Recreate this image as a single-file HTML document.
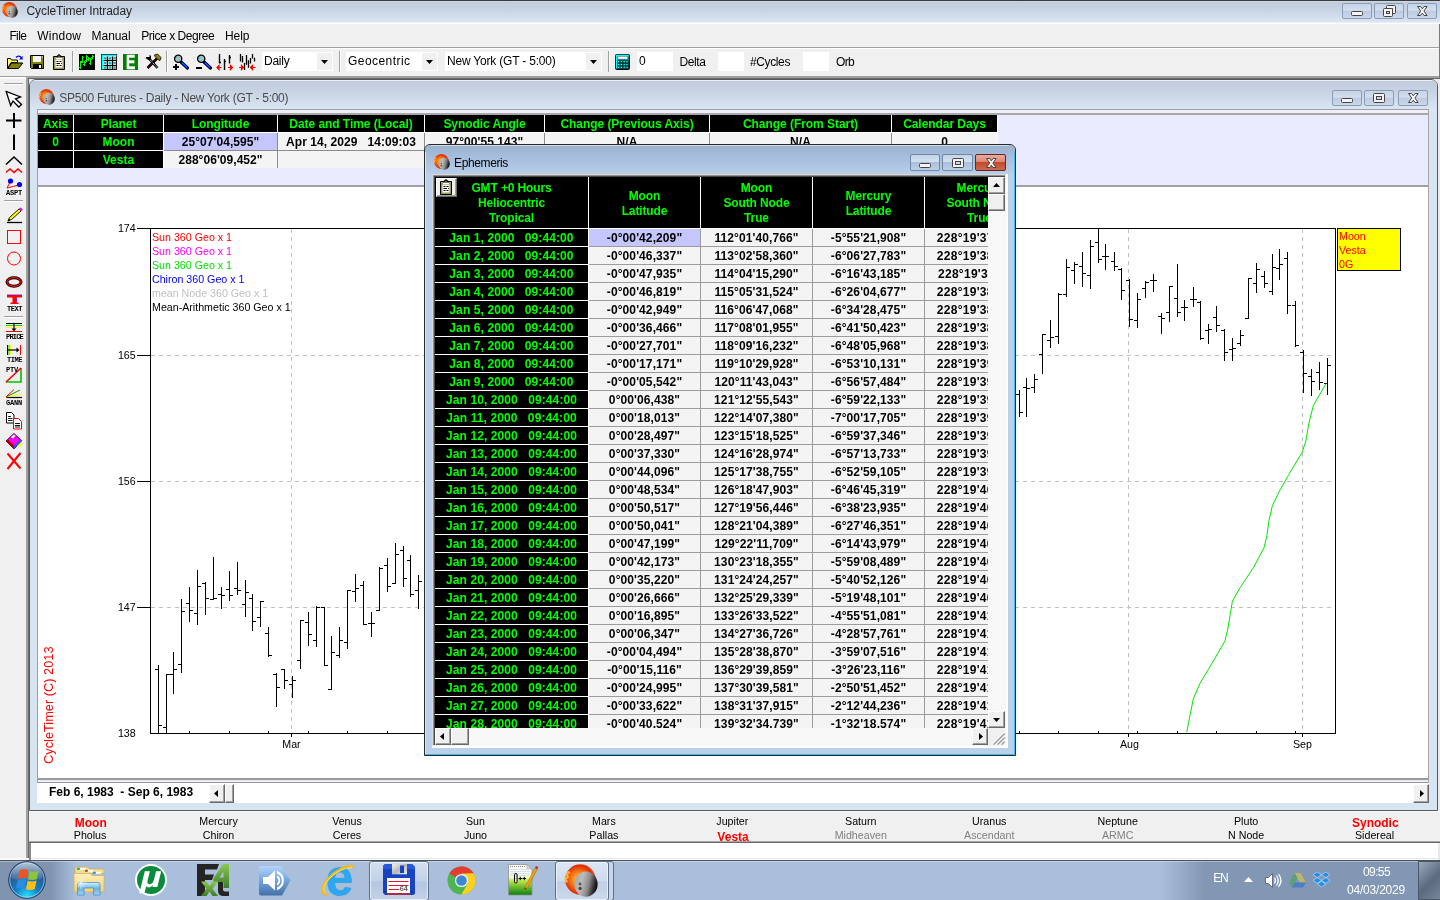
<!DOCTYPE html>
<html lang="en"><head><meta charset="utf-8"><title>CycleTimer Intraday</title>
<style>
*{box-sizing:border-box;margin:0;padding:0}
html,body{width:1440px;height:900px;overflow:hidden;background:#ececec}
body{will-change:transform;font-family:"Liberation Sans",sans-serif;font-size:12px;color:#000;position:relative}
.a{position:absolute}
.t{position:absolute;white-space:pre;line-height:1}
.ui{font-family:"Liberation Sans",sans-serif;font-size:12px;letter-spacing:0.15px}
.b{font-weight:bold}
.g{color:#00ff00}
svg{position:absolute;overflow:visible}
.cb{position:absolute;border:1px solid #8a9cb6;border-radius:2px;background:linear-gradient(#c6d4e8,#d3deee 45%,#bccbe2 50%,#cbd8ea)}
.hc{position:absolute;background:#000;color:#00ff00;font-weight:bold;font-size:12px;text-align:center;white-space:pre;overflow:hidden}
.dc{position:absolute;background:#f4f4f4;color:#000;font-weight:bold;font-size:12px;text-align:center;white-space:pre;overflow:hidden}
.pl{position:absolute;width:120px;text-align:center;font-size:11px;line-height:14px;white-space:pre}
</style></head>
<body>
<div class="a" style="left:0px;top:0px;width:1440px;height:22px;background:linear-gradient(#c0ccdc,#c5d1e1 35%,#d9e5f2);"></div>
<div class="a" style="left:0px;top:1px;width:1440px;height:1px;background:#c8d6e6;"></div>
<div class="a" style="left:0px;top:22px;width:1440px;height:1px;background:#eaf0f7;"></div>
<div class="a" style="left:0px;top:0px;width:1440px;height:1px;background:#3c3c3c;"></div>
<div class="t" style="left:26.5px;top:5px;font-size:12px;color:#262626;letter-spacing:-0.08px;">CycleTimer Intraday</div>
<div class="cb" style="left:1342px;top:3px;width:30px;height:16px"></div>
<div class="cb" style="left:1374px;top:3px;width:30px;height:16px"></div>
<div class="cb" style="left:1407px;top:3px;width:30px;height:16px"></div>
<div class="a" style="left:0px;top:23px;width:1440px;height:24px;background:#f0f0f0;"></div>
<div class="a" style="left:0px;top:47px;width:1440px;height:1px;background:#a0a0a0;"></div>
<div class="a" style="left:0px;top:48px;width:1440px;height:1px;background:#ffffff;"></div>
<div class="a" style="left:0px;top:49px;width:1440px;height:27px;background:#f0f0f0;"></div>
<div class="a" style="left:0px;top:76px;width:1440px;height:2px;background:#a0a0a0;"></div>
<div class="a" style="left:0px;top:78px;width:1440px;height:1px;background:#696969;"></div>
<div class="a" style="left:1439px;top:23px;width:1px;height:55px;background:#7a7a7a;"></div>
<div class="a" style="left:0px;top:23px;width:1440px;height:1px;background:#ffffff;"></div>
<div class="a" style="left:0px;top:77px;width:26px;height:783px;background:#f0f0f0;"></div>
<div class="a" style="left:0px;top:77px;width:26px;height:2px;background:#fcfcfc;"></div>
<div class="a" style="left:26px;top:77px;width:2px;height:783px;background:#a0a0a0;"></div>
<div class="a" style="left:28px;top:78px;width:1px;height:782px;background:#696969;"></div>
<div class="t" style="left:9.4px;top:29.5px;font-size:12px;color:#000;letter-spacing:-0.609px;">File</div>
<div class="t" style="left:37.25px;top:29.5px;font-size:12px;color:#000;letter-spacing:0.22px;">Window</div>
<div class="t" style="left:91.6px;top:29.5px;font-size:12px;color:#000;letter-spacing:-0.06px;">Manual</div>
<div class="t" style="left:141.25px;top:29.5px;font-size:12px;color:#000;letter-spacing:-0.455px;">Price x Degree</div>
<div class="t" style="left:225px;top:29.5px;font-size:12px;color:#000;letter-spacing:-0.107px;">Help</div>
<div class="a" style="left:72px;top:51px;width:1px;height:21px;background:#a0a0a0;"></div>
<div class="a" style="left:73px;top:51px;width:1px;height:21px;background:#ffffff;"></div>
<div class="a" style="left:166px;top:51px;width:1px;height:21px;background:#a0a0a0;"></div>
<div class="a" style="left:167px;top:51px;width:1px;height:21px;background:#ffffff;"></div>
<div class="a" style="left:339px;top:51px;width:1px;height:21px;background:#a0a0a0;"></div>
<div class="a" style="left:340px;top:51px;width:1px;height:21px;background:#ffffff;"></div>
<div class="a" style="left:608px;top:51px;width:1px;height:21px;background:#a0a0a0;"></div>
<div class="a" style="left:609px;top:51px;width:1px;height:21px;background:#ffffff;"></div>
<div class="a" style="left:262px;top:52px;width:71px;height:19px;background:#ffffff;"></div>
<div class="a" style="left:317px;top:53px;width:15px;height:17px;background:#f0f0f0;"></div>
<svg style="left:321px;top:60px" width="7" height="4"><path d="M0 0h7l-3.500 4z" fill="#000"/></svg>
<div class="t" style="left:264px;top:54.7px;font-size:12px;color:#000;letter-spacing:-0.234px;">Daily</div>
<div class="a" style="left:346px;top:52px;width:92px;height:19px;background:#ffffff;"></div>
<div class="a" style="left:422px;top:53px;width:15px;height:17px;background:#f0f0f0;"></div>
<svg style="left:426px;top:60px" width="7" height="4"><path d="M0 0h7l-3.500 4z" fill="#000"/></svg>
<div class="t" style="left:348px;top:54.7px;font-size:12px;color:#000;letter-spacing:0.447px;">Geocentric</div>
<div class="a" style="left:445px;top:52px;width:157px;height:19px;background:#ffffff;"></div>
<div class="a" style="left:586px;top:53px;width:15px;height:17px;background:#f0f0f0;"></div>
<svg style="left:590px;top:60px" width="7" height="4"><path d="M0 0h7l-3.500 4z" fill="#000"/></svg>
<div class="t" style="left:447px;top:54.7px;font-size:12px;color:#000;letter-spacing:-0.199px;">New York (GT - 5:00)</div>
<div class="a" style="left:637px;top:52px;width:36px;height:19px;background:#fff;"></div>
<div class="t" style="left:639px;top:54.7px;font-size:12px;color:#000;letter-spacing:0px;">0</div>
<div class="t" style="left:679.5px;top:55.5px;font-size:12px;color:#000;letter-spacing:-0.403px;">Delta</div>
<div class="a" style="left:718px;top:52px;width:26px;height:19px;background:#fff;"></div>
<div class="t" style="left:750px;top:55.5px;font-size:12px;color:#000;letter-spacing:-0.383px;">#Cycles</div>
<div class="a" style="left:803px;top:52px;width:26px;height:19px;background:#fff;"></div>
<div class="t" style="left:836px;top:55.5px;font-size:12px;color:#000;letter-spacing:-0.668px;">Orb</div>
<div class="a" style="left:29px;top:79px;width:1409px;height:732px;background:#d7e4f2;border:1px solid #5a5a5a;border-radius:7px 7px 0 0"></div>
<div class="a" style="left:30px;top:80px;width:1407px;height:29px;background:linear-gradient(#c0ccdc,#c6d2e2 35%,#d9e5f2);border-radius:5px 5px 0 0"></div>
<div class="a" style="left:35px;top:80px;width:1397px;height:1px;background:#e8eff6;"></div>
<div class="t" style="left:59.25px;top:92px;font-size:12px;color:#4a4a4a;letter-spacing:-0.262px;">SP500 Futures - Daily - New York (GT - 5:00)</div>
<div class="cb" style="left:1332px;top:90px;width:30px;height:16px"></div>
<div class="cb" style="left:1364px;top:90px;width:30px;height:16px"></div>
<div class="cb" style="left:1398px;top:90px;width:30px;height:16px"></div>
<div class="a" style="left:37px;top:109px;width:1392px;height:694px;background:#ffffff;"></div>
<div class="a" style="left:37px;top:109px;width:1392px;height:1px;background:#a0a0a0;"></div>
<div class="a" style="left:38px;top:110px;width:1390px;height:3px;background:#f0f0fc;"></div>
<div class="a" style="left:38px;top:113px;width:1390px;height:2px;background:#a8a8a8;"></div>
<div class="a" style="left:38px;top:115px;width:1390px;height:70px;background:#ebebff;"></div>
<div class="a" style="left:38px;top:185px;width:1390px;height:2px;background:#a0a0a0;"></div>
<div class="a" style="left:38px;top:778px;width:1390px;height:2px;background:#9a9a9a;"></div>
<div class="a" style="left:38px;top:780px;width:1390px;height:2px;background:#ebebff;"></div>
<div class="a" style="left:38px;top:782px;width:1390px;height:1px;background:#9a9a9a;"></div>
<div class="a" style="left:37px;top:109px;width:1px;height:674px;background:#a0a0a0;"></div>
<div class="a" style="left:1428px;top:109px;width:1px;height:674px;background:#a6a6a6;"></div>
<div class="a" style="left:37px;top:783px;width:1392px;height:20px;background:#ffffff;"></div>
<div class="t b" style="left:49px;top:786px;font-size:12px">Feb 6, 1983  - Sep 6, 1983</div>
<div class="a" style="left:38px;top:115px;width:960px;height:18px;background:#ffffff;"></div>
<div class="a" style="left:38px;top:133px;width:126px;height:35px;background:#ffffff;"></div>
<div class="a" style="left:164px;top:133px;width:833px;height:35px;background:#8c8c8c;"></div>
<div class="a" style="left:997px;top:133px;width:1px;height:35px;background:#f8f8f8;"></div>
<div class="hc" style="left:38px;top:115px;width:35px;height:17px;line-height:17px;letter-spacing:-0.05px;padding-top:1px;">Axis</div>
<div class="hc" style="left:74px;top:115px;width:89px;height:17px;line-height:17px;letter-spacing:-0.05px;padding-top:1px;">Planet</div>
<div class="hc" style="left:164px;top:115px;width:113px;height:17px;line-height:17px;letter-spacing:-0.05px;padding-top:1px;">Longitude</div>
<div class="hc" style="left:278px;top:115px;width:146px;height:17px;line-height:17px;letter-spacing:-0.05px;padding-top:1px;">Date and Time (Local)</div>
<div class="hc" style="left:425px;top:115px;width:119px;height:17px;line-height:17px;letter-spacing:-0.05px;padding-top:1px;">Synodic Angle</div>
<div class="hc" style="left:545px;top:115px;width:164px;height:17px;line-height:17px;letter-spacing:-0.05px;padding-top:1px;">Change (Previous Axis)</div>
<div class="hc" style="left:710px;top:115px;width:181px;height:17px;line-height:17px;letter-spacing:-0.05px;padding-top:1px;">Change (From Start)</div>
<div class="hc" style="left:892px;top:115px;width:105px;height:17px;line-height:17px;letter-spacing:-0.05px;padding-top:1px;">Calendar Days</div>
<div class="hc" style="left:38px;top:133px;width:35px;height:17px;line-height:17px;letter-spacing:0.05px;padding-top:1px;">0</div>
<div class="hc" style="left:74px;top:133px;width:89px;height:17px;line-height:17px;letter-spacing:0.05px;padding-top:1px;">Moon</div>
<div class="dc" style="left:164px;top:133px;width:113px;height:17px;line-height:17px;letter-spacing:0.05px;padding-top:1px;background:#c6c6ff;">25°07'04,595"</div>
<div class="dc" style="left:278px;top:133px;width:146px;height:17px;line-height:17px;letter-spacing:0.05px;padding-top:1px;">Apr 14, 2029   14:09:03</div>
<div class="dc" style="left:425px;top:133px;width:119px;height:17px;line-height:17px;letter-spacing:0.05px;padding-top:1px;">97°00'55,143"</div>
<div class="dc" style="left:545px;top:133px;width:164px;height:17px;line-height:17px;letter-spacing:0.05px;padding-top:1px;">N/A</div>
<div class="dc" style="left:710px;top:133px;width:181px;height:17px;line-height:17px;letter-spacing:0.05px;padding-top:1px;">N/A</div>
<div class="dc" style="left:892px;top:133px;width:105px;height:17px;line-height:17px;letter-spacing:0.05px;padding-top:1px;">0</div>
<div class="hc" style="left:38px;top:151px;width:35px;height:17px;line-height:17px;letter-spacing:0.05px;padding-top:1px;"></div>
<div class="hc" style="left:74px;top:151px;width:89px;height:17px;line-height:17px;letter-spacing:0.05px;padding-top:1px;">Vesta</div>
<div class="dc" style="left:164px;top:151px;width:113px;height:17px;line-height:17px;letter-spacing:0.05px;padding-top:1px;">288°06'09,452"</div>
<div class="dc" style="left:278px;top:151px;width:146px;height:17px;line-height:17px;letter-spacing:0.05px;padding-top:1px;"></div>
<div class="dc" style="left:425px;top:151px;width:119px;height:17px;line-height:17px;letter-spacing:0.05px;padding-top:1px;"></div>
<div class="dc" style="left:545px;top:151px;width:164px;height:17px;line-height:17px;letter-spacing:0.05px;padding-top:1px;"></div>
<div class="dc" style="left:710px;top:151px;width:181px;height:17px;line-height:17px;letter-spacing:0.05px;padding-top:1px;"></div>
<div class="dc" style="left:892px;top:151px;width:105px;height:17px;line-height:17px;letter-spacing:0.05px;padding-top:1px;"></div>
<svg style="left:0;top:0" width="1440" height="900" shape-rendering="crispEdges">
<path d="M151 355.5H1335M151 481.5H1335M151 607.5H1335M291.5 229V733M1128.5 229V733M1302.5 229V733" stroke="#c0c0c0" stroke-width="1" stroke-dasharray="4 4" fill="none"/>
<path d="M137 228.5H1336M150.5 228V734M150 733.5H1336M1335.5 228V734M137 355.5H150M137 481.5H150M137 607.5H150M189.5 731V733M229.5 731V733M268.5 731V733M308.5 731V733M347.5 731V733M387.5 731V733M1019.5 731V733M1058.5 731V733M1098.5 731V733M1137.5 731V733M1177.5 731V733M1216.5 731V733M1256.5 731V733M1295.5 731V733M291.5 733V737M1128.5 733V737M1302.5 733V737" stroke="#000" stroke-width="1" fill="none"/>
<path d="M158.5 665V733M155 669.5H158M159 725.5H162M166.5 674V734M163 727.5H166M167 674.5H170M173.5 652V694M170 674.5H173M174 669.5H177M181.5 599V673M178 664.5H181M182 611.5H185M189.5 587V622M186 603.5H189M190 610.5H193M197.5 570V625M194 613.5H197M198 586.5H201M205.5 582V615M202 583.5H205M206 598.5H209M213.5 557V600M210 599.5H213M214 598.5H217M221.5 587V609M218 594.5H221M222 595.5H225M229.5 571V601M226 589.5H229M230 595.5H233M237.5 562V595M234 588.5H237M238 590.5H241M245.5 580V617M242 604.5H245M246 592.5H249M252.5 594V631M249 598.5H252M253 621.5H256M260.5 601V627M257 617.5H260M261 601.5H264M268.5 627V657M265 633.5H268M269 655.5H272M276.5 673V707M273 674.5H276M277 687.5H280M284.5 669V689M281 669.5H284M285 680.5H288M292.5 676V698M289 684.5H292M293 680.5H296M300.5 620V669M297 660.5H300M301 620.5H304M308.5 612V646M305 622.5H308M309 634.5H312M316.5 606V647M313 640.5H316M317 607.5H320M324.5 607V666M321 607.5H324M325 665.5H328M331.5 636V690M328 689.5H331M332 652.5H335M339.5 627V658M336 655.5H339M340 640.5H343M347.5 590V649M344 642.5H347M348 590.5H351M355.5 574V602M352 591.5H355M356 588.5H359M363.5 581V625M360 585.5H363M364 624.5H367M371.5 612V637M368 623.5H371M372 623.5H375M379.5 567V611M376 610.5H379M380 568.5H383M387.5 558V592M384 565.5H387M388 586.5H391M395.5 543V584M392 583.5H395M396 554.5H399M403.5 546V587M400 550.5H403M404 578.5H407M410.5 555V597M407 560.5H410M411 594.5H414M418.5 575V609M415 590.5H418M419 581.5H422M1019.5 390V417M1016 394.5H1019M1020 412.5H1023M1026.5 378V417M1023 387.5H1026M1027 388.5H1030M1034.5 374V393M1031 387.5H1034M1035 379.5H1038M1042.5 334V374M1039 354.5H1042M1043 334.5H1046M1050.5 320V348M1047 340.5H1050M1051 337.5H1054M1058.5 293V344M1055 336.5H1058M1059 294.5H1062M1066.5 259V297M1063 294.5H1066M1067 267.5H1070M1074.5 262V284M1071 270.5H1074M1075 264.5H1078M1082.5 252V287M1079 266.5H1082M1083 273.5H1086M1090.5 240V289M1087 275.5H1090M1091 246.5H1094M1098.5 229V263M1095 242.5H1098M1099 259.5H1102M1105.5 244V270M1102 256.5H1105M1106 256.5H1109M1114.5 252V271M1111 261.5H1114M1115 266.5H1118M1121.5 268V300M1118 269.5H1121M1122 290.5H1125M1129.5 279V327M1126 280.5H1129M1130 319.5H1133M1137.5 293V328M1134 320.5H1137M1138 299.5H1141M1145.5 281V298M1142 288.5H1145M1146 282.5H1149M1153.5 274V292M1150 280.5H1153M1154 280.5H1157M1161.5 313V334M1158 316.5H1161M1162 318.5H1165M1169.5 286V322M1166 312.5H1169M1170 286.5H1173M1177.5 264V317M1174 298.5H1177M1178 312.5H1181M1184.5 300V321M1181 307.5H1184M1185 307.5H1188M1193.5 287V307M1190 299.5H1193M1194 299.5H1197M1200.5 301V340M1197 302.5H1200M1201 338.5H1204M1208.5 324V344M1205 330.5H1208M1209 329.5H1212M1216.5 306V332M1213 317.5H1216M1217 325.5H1220M1224.5 329V361M1221 330.5H1224M1225 352.5H1228M1232.5 338V361M1229 349.5H1232M1233 348.5H1236M1240.5 330V346M1237 343.5H1240M1241 335.5H1244M1248.5 278V319M1245 318.5H1248M1249 278.5H1252M1256.5 263V293M1253 283.5H1256M1257 269.5H1260M1264.5 271V288M1261 276.5H1264M1265 283.5H1268M1272.5 254V295M1269 291.5H1272M1273 267.5H1276M1279.5 249V280M1276 268.5H1279M1280 264.5H1283M1287.5 252V314M1284 258.5H1287M1288 305.5H1291M1295.5 301V347M1292 305.5H1295M1296 345.5H1299M1303.5 350V393M1300 352.5H1303M1304 373.5H1307M1311.5 369V396M1308 376.5H1311M1312 381.5H1315M1319.5 362V390M1316 372.5H1319M1320 382.5H1323M1327.5 358V395M1324 383.5H1327M1328 365.5H1331" stroke="#000" stroke-width="1" fill="none"/>
<path d="M1326.2 383.3L1313.3 405.6L1308.9 423.3L1305.8 441.1L1302.2 452.2L1288.9 474.4L1280 490L1272.4 505.6L1268.9 521.1L1266.7 536.7L1264 547.8L1253.3 567.8L1240 587.8L1232.4 601.1L1230.2 614.4L1227.6 630L1224.9 641.1L1213.3 661.1L1200 683.3L1193.3 698.9L1190.2 714.4L1186.7 732.2" stroke="#00e800" stroke-width="1" fill="none" shape-rendering="auto"/>
</svg>
<div class="t" style="left:118px;top:223px;font-size:10.67px;color:#000;letter-spacing:-0.101px;">174</div>
<div class="t" style="left:118px;top:350px;font-size:10.67px;color:#000;letter-spacing:-0.101px;">165</div>
<div class="t" style="left:118px;top:476px;font-size:10.67px;color:#000;letter-spacing:-0.101px;">156</div>
<div class="t" style="left:118px;top:602px;font-size:10.67px;color:#000;letter-spacing:-0.101px;">147</div>
<div class="t" style="left:118px;top:728px;font-size:10.67px;color:#000;letter-spacing:-0.101px;">138</div>
<div class="t" style="left:282.31px;top:739px;font-size:10.67px;color:#000;letter-spacing:0px;">Mar</div>
<div class="t" style="left:1120.01px;top:739px;font-size:10.67px;color:#000;letter-spacing:0px;">Aug</div>
<div class="t" style="left:1293.01px;top:739px;font-size:10.67px;color:#000;letter-spacing:0px;">Sep</div>
<div class="t" style="left:152px;top:232px;font-size:10.67px;color:#ff0000;letter-spacing:0px;">Sun 360 Geo x 1</div>
<div class="t" style="left:152px;top:246px;font-size:10.67px;color:#ff00ff;letter-spacing:0px;">Sun 360 Geo x 1</div>
<div class="t" style="left:152px;top:260px;font-size:10.67px;color:#00e000;letter-spacing:0px;">Sun 360 Geo x 1</div>
<div class="t" style="left:152px;top:274px;font-size:10.67px;color:#0000ff;letter-spacing:0px;">Chiron 360 Geo x 1</div>
<div class="t" style="left:152px;top:288px;font-size:10.67px;color:#c0c0c0;letter-spacing:0px;">mean Node 360 Geo x 1</div>
<div class="t" style="left:152px;top:302px;font-size:10.67px;color:#000;letter-spacing:0px;">Mean-Arithmetic 360 Geo x 1</div>
<div class="t" style="left:43px;top:764px;font-size:12.8px;color:#ff0000;transform-origin:0 0;transform:rotate(-90deg)">CycleTimer (C) 2013</div>
<div class="a" style="left:1337px;top:228px;width:64px;height:43px;background:#ffff00;border:1px solid #000"></div>
<div class="t" style="left:1339px;top:231px;font-size:10.67px;color:#ff0000;letter-spacing:0px;">Moon</div>
<div class="t" style="left:1339px;top:245px;font-size:10.67px;color:#ff0000;letter-spacing:0px;">Vesta</div>
<div class="t" style="left:1339px;top:259px;font-size:10.67px;color:#ff0000;letter-spacing:0px;">0G</div>
<div class="a" style="left:209px;top:784px;width:16px;height:19px;background:#f0f0f0;border:1px solid;border-color:#ffffff #696969 #696969 #ffffff;box-shadow:inset -1px -1px 0 #a0a0a0,inset 1px 1px 0 #f0f0f0"></div>
<svg style="left:214px;top:790px" width="4" height="7"><path d="M4 0v7l-4-3.5z" fill="#000"/></svg>
<div class="a" style="left:225px;top:784px;width:9px;height:19px;background:#f0f0f0;border:1px solid;border-color:#ffffff #696969 #696969 #ffffff;box-shadow:inset -1px -1px 0 #a0a0a0,inset 1px 1px 0 #f0f0f0"></div>
<div class="a" style="left:1413px;top:784px;width:16px;height:19px;background:#f0f0f0;border:1px solid;border-color:#ffffff #696969 #696969 #ffffff;box-shadow:inset -1px -1px 0 #a0a0a0,inset 1px 1px 0 #f0f0f0"></div>
<svg style="left:1420px;top:790px" width="4" height="7"><path d="M0 0v7l4-3.5z" fill="#000"/></svg>
<div class="a" style="left:29px;top:811px;width:1411px;height:31px;background:#f0f0f0;"></div>
<div class="a" style="left:29px;top:811px;width:1411px;height:1px;background:#f8f8f8;"></div>
<div class="a" style="left:29px;top:841px;width:1411px;height:1px;background:#a8a8a8;"></div>
<div class="a" style="left:29px;top:842px;width:1411px;height:1px;background:#686868;"></div>
<div class="a" style="left:31px;top:843px;width:1407px;height:17px;background:#ffffff;"></div>
<div class="a" style="left:1438px;top:843px;width:2px;height:17px;background:#e8e8e8;"></div>
<div class="a" style="left:29px;top:858px;width:1411px;height:1px;background:#e6e6e6;"></div>
<div class="a" style="left:29px;top:843px;width:2px;height:17px;background:#8a8a8a;"></div>
<div class="a" style="left:0px;top:858px;width:29px;height:2px;background:#fafafa;"></div>
<div class="t" style="left:74.81px;top:817px;font-size:12px;color:#ff0000;letter-spacing:0px;font-weight:bold;">Moon</div>
<div class="t" style="left:73.79px;top:830px;font-size:10.67px;color:#000;letter-spacing:0px;">Pholus</div>
<div class="t" style="left:199.28px;top:816px;font-size:10.67px;color:#000;letter-spacing:0px;">Mercury</div>
<div class="t" style="left:202.83px;top:830px;font-size:10.67px;color:#000;letter-spacing:0px;">Chiron</div>
<div class="t" style="left:332.17px;top:816px;font-size:10.67px;color:#000;letter-spacing:0px;">Venus</div>
<div class="t" style="left:332.77px;top:830px;font-size:10.67px;color:#000;letter-spacing:0px;">Ceres</div>
<div class="t" style="left:465.96px;top:816px;font-size:10.67px;color:#000;letter-spacing:0px;">Sun</div>
<div class="t" style="left:463.88px;top:830px;font-size:10.67px;color:#000;letter-spacing:0px;">Juno</div>
<div class="t" style="left:592.04px;top:816px;font-size:10.67px;color:#000;letter-spacing:0px;">Mars</div>
<div class="t" style="left:589.37px;top:830px;font-size:10.67px;color:#000;letter-spacing:0px;">Pallas</div>
<div class="t" style="left:716.34px;top:816px;font-size:10.67px;color:#000;letter-spacing:0px;">Jupiter</div>
<div class="t" style="left:717.37px;top:831px;font-size:12px;color:#ff0000;letter-spacing:0px;font-weight:bold;">Vesta</div>
<div class="t" style="left:845.08px;top:816px;font-size:10.67px;color:#000;letter-spacing:0px;">Saturn</div>
<div class="t" style="left:834.7px;top:830px;font-size:10.67px;color:#808080;letter-spacing:0px;">Midheaven</div>
<div class="t" style="left:972.05px;top:816px;font-size:10.67px;color:#000;letter-spacing:0px;">Uranus</div>
<div class="t" style="left:964.04px;top:830px;font-size:10.67px;color:#808080;letter-spacing:0px;">Ascendant</div>
<div class="t" style="left:1097.53px;top:816px;font-size:10.67px;color:#000;letter-spacing:0px;">Neptune</div>
<div class="t" style="left:1101.99px;top:830px;font-size:10.67px;color:#808080;letter-spacing:0px;">ARMC</div>
<div class="t" style="left:1233.99px;top:816px;font-size:10.67px;color:#000;letter-spacing:0px;">Pluto</div>
<div class="t" style="left:1228.06px;top:830px;font-size:10.67px;color:#000;letter-spacing:0px;">N Node</div>
<div class="t" style="left:1351.96px;top:817px;font-size:12px;color:#ff0000;letter-spacing:0px;font-weight:bold;">Synodic</div>
<div class="t" style="left:1355.03px;top:830px;font-size:10.67px;color:#000;letter-spacing:0px;">Sidereal</div>
<div class="a" style="left:0px;top:860px;width:1440px;height:40px;background:linear-gradient(90deg,#8094b0 0,#8094b0 50px,#a9bfdb 76px,#a9bfdb 1160px,#8297b4 1205px,#8297b4 100%);"></div>
<div class="a" style="left:0px;top:860px;width:1440px;height:1px;background:#45515f;"></div>
<div class="a" style="left:0px;top:861px;width:1440px;height:1px;background:rgba(255,255,255,.35);"></div>
<div class="a" style="left:369px;top:861px;width:60px;height:40px;border:1px solid #5d6f88;border-radius:3px;background:linear-gradient(#d3dff0,#c2d1e8 50%,#b4c6e0 52%,#c3d2e8);box-shadow:inset 0 0 0 1px rgba(255,255,255,.6)"></div>
<div class="a" style="left:560px;top:861px;width:54px;height:40px;border:1px solid #5d6f88;border-radius:3px;background:#c9d6ea"></div>
<div class="a" style="left:555px;top:861px;width:54px;height:40px;border:1px solid #5d6f88;border-radius:3px;background:linear-gradient(#dce6f4,#cfdbee 50%,#c0cfe6 52%,#ccd9ec);box-shadow:inset 0 0 0 1px rgba(255,255,255,.6)"></div>
<div class="t" style="left:1213.3px;top:872px;font-size:12px;color:#fff;letter-spacing:-1.235px;">EN</div>
<div class="t" style="left:1363px;top:866px;font-size:12px;color:#fff;letter-spacing:-0.606px;">09:55</div>
<div class="t" style="left:1346.97px;top:884px;font-size:12px;color:#fff;letter-spacing:-0.2px;">04/03/2029</div>
<div class="a" style="left:1418px;top:861px;width:22px;height:39px;border:1px solid #4b5867;border-right:0;background:linear-gradient(135deg,#9aa8ba,#66758a 45%,#5c6a7d 55%,#788699)"></div>
<svg style="left:2px;top:2px" width="16" height="16" viewBox="0 0 16 16.200" ><defs><radialGradient id="sg1" cx=".45" cy=".5" r=".55"><stop offset="0" stop-color="#ffd040"/><stop offset=".55" stop-color="#f26a10"/><stop offset=".85" stop-color="#e02808"/><stop offset="1" stop-color="#e84010" stop-opacity=".7"/></radialGradient><linearGradient id="mg1" x1="0" y1=".35" x2="1" y2=".6"><stop offset="0" stop-color="#a8a8a8"/><stop offset=".3" stop-color="#bcbcbc"/><stop offset=".6" stop-color="#8c8c8c"/><stop offset=".82" stop-color="#3a3a3a"/><stop offset="1" stop-color="#000"/></linearGradient></defs><circle cx="7.500" cy="7.600" r="7.500" fill="url(#sg1)"/><path d="M1 9l-1-1.5 1.2-1.2-.4-1.6 1.5-.8" fill="none" stroke="#ffc850" stroke-width="1.2" opacity=".8"/><ellipse cx="10.200" cy="9.900" rx="5.700" ry="6.200" fill="url(#mg1)"/><circle cx="7.300" cy="9.800" r=".7" fill="#555"/><circle cx="7.300" cy="12" r=".8" fill="#444"/></svg>
<svg style="left:39px;top:89px" width="16" height="16" viewBox="0 0 16 16.200" ><defs><radialGradient id="sg2" cx=".45" cy=".5" r=".55"><stop offset="0" stop-color="#ffd040"/><stop offset=".55" stop-color="#f26a10"/><stop offset=".85" stop-color="#e02808"/><stop offset="1" stop-color="#e84010" stop-opacity=".7"/></radialGradient><linearGradient id="mg2" x1="0" y1=".35" x2="1" y2=".6"><stop offset="0" stop-color="#a8a8a8"/><stop offset=".3" stop-color="#bcbcbc"/><stop offset=".6" stop-color="#8c8c8c"/><stop offset=".82" stop-color="#3a3a3a"/><stop offset="1" stop-color="#000"/></linearGradient></defs><circle cx="7.500" cy="7.600" r="7.500" fill="url(#sg2)"/><path d="M1 9l-1-1.5 1.2-1.2-.4-1.6 1.5-.8" fill="none" stroke="#ffc850" stroke-width="1.2" opacity=".8"/><ellipse cx="10.200" cy="9.900" rx="5.700" ry="6.200" fill="url(#mg2)"/><circle cx="7.300" cy="9.800" r=".7" fill="#555"/><circle cx="7.300" cy="12" r=".8" fill="#444"/></svg>
<svg style="left:1342px;top:3px" width="30" height="16" ><rect x="9.5" y="8.5" width="11" height="4" rx="1" fill="#f4f4f4" stroke="#444" stroke-width="1"/></svg>
<svg style="left:1374px;top:3px" width="30" height="16" ><rect x="12.5" y="2.5" width="9" height="8" rx="1" fill="#f4f4f4" stroke="#444"/><rect x="15.5" y="5.5" width="3" height="2" fill="#cfd8e6" stroke="#444"/><rect x="9.5" y="5.5" width="9" height="8" rx="1" fill="#f4f4f4" stroke="#444"/><rect x="12.5" y="8.5" width="3" height="2" fill="#cfd8e6" stroke="#444"/></svg>
<svg style="left:1407px;top:3px" width="30" height="16" ><path d="M10.5 3.5h3l1.8 2.3 1.8-2.3h3l-3.2 4.5 3.2 4.5h-3l-1.8-2.3-1.8 2.3h-3l3.2-4.5z" fill="#f4f4f4" stroke="#444" stroke-width="1" stroke-linejoin="round"/></svg>
<svg style="left:1332px;top:90px" width="30" height="16" ><rect x="9.5" y="8.5" width="11" height="4" rx="1" fill="#f4f4f4" stroke="#444" stroke-width="1"/></svg>
<svg style="left:1364px;top:90px" width="30" height="16" ><rect x="9.5" y="3.5" width="11" height="9" rx="1" fill="#f4f4f4" stroke="#444"/><rect x="12.5" y="6.5" width="5" height="3" fill="#d0d8e4" stroke="#444"/></svg>
<svg style="left:1398px;top:90px" width="30" height="16" ><path d="M10.5 3.5h3l1.8 2.3 1.8-2.3h3l-3.2 4.5 3.2 4.5h-3l-1.8-2.3-1.8 2.3h-3l3.2-4.5z" fill="#f4f4f4" stroke="#444" stroke-width="1" stroke-linejoin="round"/></svg>
<svg style="left:7px;top:54px" width="17" height="15" ><path d="M9 3.5c1.5-2 4-2 5.5.3" fill="none" stroke="#0000ff" stroke-width="1.3"/><path d="M15.6 2v3.6h-3.6z" fill="#0000ff"/><path d="M.5 14.5v-10h3l1 1.500h6v2.500h-6.500z" fill="#ffff70" stroke="#000"/><path d="M.8 14.500l3.700-5.500h11.300l-4.300 5.500z" fill="#808000" stroke="#000" stroke-linejoin="round"/></svg>
<svg style="left:30px;top:55px" width="15" height="15" ><path d="M.5.5h13v13h-12l-1-1z" fill="#808000" stroke="#000"/><rect x="3" y="1" width="8" height="6" fill="#f4f4f4"/><rect x="3" y="9" width="9" height="4.500" fill="#000"/><rect x="9" y="10" width="2" height="3" fill="#f4f4f4"/><rect x="12" y="1.500" width="1" height="1" fill="#fff"/></svg>
<svg style="left:52px;top:54px" width="14" height="16" ><path d="M1.5 2.5h11v13h-11z" fill="#9a9a48" stroke="#000"/><path d="M3.5 5.5h7v8h-7z" fill="#fff" stroke="none"/><path d="M4 2.5l3-2.5 3 2.5v2h-6z" fill="#000"/><path d="M6 2.6l1-1.2 1 1.2z" fill="#ffff00"/><rect x="4" y="3.5" width="6" height="1.5" fill="#fff"/><path d="M4.5 7.5h2M7.5 7.5h2M4.5 9.5h3.5M9 9.5h.8M4.5 11.5h2M7.5 11.5h2" stroke="#000" stroke-width="1"/></svg>
<svg style="left:79px;top:54px" width="16" height="16" shape-rendering="crispEdges"><rect width="16" height="16" fill="#000"/><path d="M1.5 7V15M1.0 13.5h-1M2.0 8.5h1" stroke="#00ff00" stroke-width="1"/><path d="M3.5 2V9M3.0 7.5h-1M4.0 3.5h1" stroke="#00ff00" stroke-width="1"/><path d="M5.5 7V12M5.0 10.5h-1M6.0 8.5h1" stroke="#00ff00" stroke-width="1"/><path d="M7.5 1V8M7.0 6.5h-1M8.0 2.5h1" stroke="#00ff00" stroke-width="1"/><path d="M9.5 3V7M9.0 5.5h-1M10.0 4.5h1" stroke="#00ff00" stroke-width="1"/><path d="M11.5 4V11M11.0 9.5h-1M12.0 5.5h1" stroke="#00ff00" stroke-width="1"/><path d="M13.5 1V5M13.0 3.5h-1M14.0 2.5h1" stroke="#00ff00" stroke-width="1"/></svg>
<svg style="left:101px;top:54px" width="16" height="16" ><rect x=".5" y=".5" width="15" height="15" fill="#c8f0f0" stroke="#301010"/><path d="M1 1.500h14.500M1.500 1v14.500" stroke="#00ffff" stroke-width="1.5"/><path d="M2.500 6.500h13M2.500 11.500h13M6.500 2.500v13M11.500 2.500v13" stroke="#000" stroke-width="1.2"/><rect x="3.0999999999999996" y="3.0999999999999996" width="2.400" height="2.400" fill="#30a0a0"/><rect x="3.0999999999999996" y="7.8" width="2.400" height="2.400" fill="#30a0a0"/><rect x="3.0999999999999996" y="12.4" width="2.400" height="2.400" fill="#30a0a0"/><rect x="7.8" y="3.0999999999999996" width="2.400" height="2.400" fill="#30a0a0"/><rect x="7.8" y="7.8" width="2.400" height="2.400" fill="#30a0a0"/><rect x="7.8" y="12.4" width="2.400" height="2.400" fill="#30a0a0"/><rect x="12.4" y="3.0999999999999996" width="2.400" height="2.400" fill="#30a0a0"/><rect x="12.4" y="7.8" width="2.400" height="2.400" fill="#30a0a0"/><rect x="12.4" y="12.4" width="2.400" height="2.400" fill="#30a0a0"/></svg>
<div class="a" style="left:123px;top:54px;width:15px;height:16px;background:#008000;"></div>
<div class="t" style="left:125.500px;top:52px;font-size:20px;font-weight:bold;color:#fff;-webkit-text-stroke:.5px #fff;transform-origin:0 0;transform:scale(.7,1)">E</div>
<svg style="left:145px;top:54px" width="17" height="16" ><path d="M2.500 14l9.500-9.500" stroke="#000" stroke-width="2.600"/><path d="M2.500 14l9.500-9.500" stroke="#c00000" stroke-width="1" stroke-dasharray="1 1"/><path d="M9.500 1l3-1 3.500 3.500-1 3-1.500-.5-3.500-3.500z" fill="#908020" stroke="#000" stroke-width=".8"/><path d="M4 4.500l8.500 9.500" stroke="#000" stroke-width="2.600"/><path d="M4 4.500l8.500 9.500" stroke="#e8e8e8" stroke-width="1" stroke-dasharray="1 1"/><path d="M1 3a2.600 2.600 0 1 0 3.500-2.200v2.200h-1.800z" fill="#000"/></svg>
<svg style="left:173px;top:54px" width="17" height="17" ><path d="M8 8l6.500 6" stroke="#000" stroke-width="3.200" stroke-linecap="round"/><path d="M8.500 8.500l5.800 5.300" stroke="#0000e0" stroke-width="2"/><path d="M9 8.800l5.300 4.800" stroke="#00e0ff" stroke-width=".7"/><circle cx="5.200" cy="4.800" r="3.600" fill="#b8b8b8" stroke="#000" stroke-width="1.300"/><circle cx="4.300" cy="3.800" r="1" fill="#00ffff"/><circle cx="6" cy="6" r=".7" fill="#00ffff"/><path d="M0 13h6M3 10v6" stroke="#000" stroke-width="2"/></svg>
<svg style="left:196px;top:54px" width="17" height="17" ><path d="M8 8l6.500 6" stroke="#000" stroke-width="3.200" stroke-linecap="round"/><path d="M8.500 8.500l5.800 5.300" stroke="#0000e0" stroke-width="2"/><path d="M9 8.800l5.300 4.800" stroke="#00e0ff" stroke-width=".7"/><circle cx="5.200" cy="4.800" r="3.600" fill="#b8b8b8" stroke="#000" stroke-width="1.300"/><circle cx="4.300" cy="3.800" r="1" fill="#00ffff"/><circle cx="6" cy="6" r=".7" fill="#00ffff"/><path d="M0 14h6" stroke="#000" stroke-width="2"/></svg>
<svg style="left:216px;top:54px" width="18" height="17" ><path d="M3.500 0v9.500M3.500 8.500h1.500M8.500 5v11M8.500 7.500h1.500M13.500 1v8.500M13.500 3.500h1.500" stroke="#000" stroke-width="1.400" fill="none"/><path d="M1 13.500h4.500M3 11.500l-2 2 2 2zM12 13.500h4M14.500 11.500l2 2-2 2z" stroke="#ff0000" stroke-width="1.200" fill="#ff0000"/></svg>
<svg style="left:239px;top:54px" width="18" height="17" ><path d="M1.500 0v7.500M3.500 2v6.500M5.500 9v7M7.500 1v9.700M9.500 6.300v7.500M11.500 4v5.500M13.500 0v4.500M15.500 3.800v3.700" stroke="#000" stroke-width="1.300" fill="none"/><path d="M0 13.500h4M2.500 11.500l2 2-2 2zM12 13.500h4.500M13.500 11.500l-2 2 2 2z" stroke="#ff0000" stroke-width="1.200" fill="#ff0000"/></svg>
<svg style="left:615px;top:54px" width="15" height="16" ><rect x=".5" y=".5" width="14" height="15" rx="1" fill="#008888" stroke="#200808"/><path d="M1.500 14v-12.500h12" stroke="#00ffff" stroke-width="1.400" fill="none"/><rect x="3" y="2.600" width="9.500" height="2.400" fill="#fff" stroke="#a08888" stroke-width=".5"/><rect x="2.300" y="6.300" width="11.700" height="8.700" fill="#003838"/><rect x="2.9000000000000004" y="6.8999999999999995" width="1.400" height="1.400" fill="#00ffff"/><rect x="5.7" y="6.8999999999999995" width="1.400" height="1.400" fill="#00ffff"/><rect x="8.5" y="6.8999999999999995" width="1.400" height="1.400" fill="#00ffff"/><rect x="11.3" y="6.8999999999999995" width="1.400" height="1.400" fill="#00ffff"/><rect x="2.9000000000000004" y="9.9" width="1.400" height="1.400" fill="#00ffff"/><rect x="5.7" y="9.9" width="1.400" height="1.400" fill="#00ffff"/><rect x="8.5" y="9.9" width="1.400" height="1.400" fill="#00ffff"/><rect x="11.3" y="9.9" width="1.400" height="1.400" fill="#00ffff"/><rect x="2.9000000000000004" y="12.700000000000001" width="1.400" height="1.400" fill="#00ffff"/><rect x="5.7" y="12.700000000000001" width="1.400" height="1.400" fill="#00ffff"/><rect x="8.5" y="12.700000000000001" width="1.400" height="1.400" fill="#00ffff"/><rect x="11.3" y="12.700000000000001" width="1.400" height="1.400" fill="#00ffff"/></svg>
<div class="a" style="left:4px;top:83px;width:19px;height:1px;background:#a0a0a0;"></div>
<div class="a" style="left:4px;top:84px;width:19px;height:1px;background:#ffffff;"></div>
<div class="a" style="left:4px;top:200px;width:19px;height:1px;background:#a0a0a0;"></div>
<div class="a" style="left:4px;top:201px;width:19px;height:1px;background:#ffffff;"></div>
<div class="a" style="left:4px;top:316px;width:19px;height:1px;background:#a0a0a0;"></div>
<div class="a" style="left:4px;top:317px;width:19px;height:1px;background:#ffffff;"></div>
<svg style="left:0;top:0" width="30" height="480"><path d="M6 91l0 .3 14.500 5.700-5 1.800 6 5.700-2.700 2.500-5.800-6-2.300 4.500z" fill="#fff" stroke="#000" stroke-width="1.300" stroke-linejoin="miter"/><path d="M6 120.500h15.500M14 113v15" stroke="#000" stroke-width="2"/><path d="M14 134.500v15.500" stroke="#000" stroke-width="2"/><path d="M6 164.500l8-7.500 8 7.500" stroke="#000" stroke-width="1.500" fill="none"/><path d="M6 172.500l4-3.500 4 3.500 4-3.500 4 3.500" stroke="#ff0000" stroke-width="1.500" fill="none"/><path d="M10 182l-3 6 12-3" stroke="#ff0000" stroke-width="1" fill="none"/><circle cx="10.500" cy="181" r="2.600" fill="#0000ff"/><circle cx="19.500" cy="184.500" r="2.600" fill="#0000ff"/><path d="M7 222.500h15" stroke="#000" stroke-width="1.300"/><path d="M8 221l1.500-3.500 9.500-8.500 2 2-9.500 8.500z" fill="#ffff00" stroke="#000" stroke-width=".9"/><path d="M19 209l1.500-1.200 2 2-1.500 1.200z" fill="#ff00ff" stroke="#a000a0" stroke-width=".5"/><path d="M8 221l1-2.300 1.300 1.300z" fill="#000"/><rect x="7.500" y="230.500" width="13" height="13" fill="none" stroke="#ff0000"/><circle cx="14" cy="258.500" r="6.500" fill="none" stroke="#ff0000"/><ellipse cx="14" cy="282" rx="7" ry="4.300" fill="none" stroke="#000" stroke-width="3"/><ellipse cx="14" cy="282" rx="7" ry="4.300" fill="none" stroke="#ff0000" stroke-width="1.300"/><path d="M7 295h15v2.500h-5.500v5h2v1.500h-8v-1.500h2v-5h-5.500z" fill="#ff0000"/><path d="M7 295h15M16.500 297.500v5" stroke="#8000c0" stroke-width=".8"/><path d="M6 323.500h16" stroke="#000"/><path d="M6 325.500h16" stroke="#00e000"/><path d="M6 327.500h16" stroke="#ffff00"/><path d="M6 331.500h16" stroke="#ff0000"/><path d="M14 323v7" stroke="#000" stroke-width="1.200"/><path d="M11.500 328.500h5l-2.500 3z" fill="#000"/><path d="M7.500 345v10" stroke="#000"/><path d="M9 345v10" stroke="#00e000"/><path d="M10.500 345v10" stroke="#ffff00"/><path d="M20.500 345v10" stroke="#ff0000"/><path d="M7 350h11" stroke="#000" stroke-width="1.200"/><path d="M16.500 347.500v5l3-2.500z" fill="#000"/><path d="M6 382h15.500M21 368v14.500" stroke="#00c000" stroke-width="1.600" fill="none"/><path d="M6 382l15-14" stroke="#ff0000" stroke-width="1.600"/><path d="M6 397.500h16" stroke="#000" stroke-width="1.200"/><path d="M6 397l16-3" stroke="#ffff00" stroke-width="1"/><path d="M6 397l14-7" stroke="#00a000" stroke-width="1"/><path d="M6 397l8-7.500" stroke="#ff0000" stroke-width="1"/><path d="M6.500 412.500h5l2.500 2.500v8h-7.500z" fill="#fff" stroke="#000"/><path d="M8 416.500h3M8 418.500h4.500M8 420.500h4.500" stroke="#000" stroke-width=".9"/><path d="M13.500 418.500h5l3 3v7.500h-8z" fill="#fff" stroke="#ff0000"/><path d="M15 423.500h5M15 425.500h5M15 427h5" stroke="#000" stroke-width=".9"/><path d="M6 441l8-7.500 8 7.500-8 8z" fill="#ff00ff" stroke="#000" stroke-width=".8"/><path d="M6 441l8 8v-4l-6.500-6z" fill="#c00000"/><path d="M14 449l8-8-1.500-1.500-6.500 6z" fill="#3050ff"/><path d="M17 446l5-5v5.500z" fill="#ffff00"/><path d="M11 437l3-2.500 1.500 1.500-3 2.500z" fill="#fff"/><path d="M7.500 453.500l13 15M20.500 453l-13 16" stroke="#ff0000" stroke-width="2"/></svg>
<div class="t" style="left:6px;top:190px;font-size:7px;font-weight:bold;color:#000;letter-spacing:-0.2px;font-family:'Liberation Mono',monospace">ASPT</div>
<div class="t" style="left:7px;top:306px;font-size:7px;font-weight:bold;color:#000;letter-spacing:-0.45px;font-family:'Liberation Mono',monospace">TEXT</div>
<div class="t" style="left:6px;top:334px;font-size:7px;font-weight:bold;color:#000;letter-spacing:-0.8px;font-family:'Liberation Mono',monospace">PRICE</div>
<div class="t" style="left:7px;top:356.5px;font-size:7px;font-weight:bold;color:#000;letter-spacing:-0.45px;font-family:'Liberation Mono',monospace">TIME</div>
<div class="t" style="left:6px;top:367px;font-size:7px;font-weight:bold;color:#000;letter-spacing:-0.2px;font-family:'Liberation Mono',monospace">PTV</div>
<div class="t" style="left:6px;top:400px;font-size:7px;font-weight:bold;color:#000;letter-spacing:-0.2px;font-family:'Liberation Mono',monospace">GANN</div>
<svg style="left:8px;top:861px" width="38" height="38" ><defs><radialGradient id="orb" cx=".5" cy=".95" r=".95"><stop offset="0" stop-color="#30e0ff"/><stop offset=".35" stop-color="#1080c8"/><stop offset=".7" stop-color="#2a5a94"/><stop offset="1" stop-color="#5c7ea4"/></radialGradient><linearGradient id="orbh" x1="0" y1="0" x2="0" y2="1"><stop offset="0" stop-color="#fff" stop-opacity=".55"/><stop offset="1" stop-color="#fff" stop-opacity=".08"/></linearGradient></defs><circle cx="19" cy="19" r="18.300" fill="url(#orb)" stroke="#1c3c64" stroke-width="1"/><circle cx="19" cy="19" r="17.200" fill="none" stroke="#cfe0f2" stroke-width=".8" opacity=".8"/><path d="M3.500 17a15.500 15.500 0 0 1 31 0c-9 3.500-22 3.500-31 0z" fill="url(#orbh)"/><path d="M11.500 9.500c3-1.500 6-1.500 8.500-.3l-1.600 8.300c-2.500-1-5.500-.8-8.500.5z" fill="#f0541c"/><path d="M21.500 9.800c3 1.200 6 1.200 9-.3l-1.700 8.500c-3 1.300-6 1.300-8.900.2z" fill="#8cc43c"/><path d="M9.600 19.500c3-1.300 6-1.500 8.500-.5l-1.600 8.300c-2.600-1-5.600-.8-8.500.5z" fill="#2c8ce0"/><path d="M19.600 19.800c3 1.100 6 1.100 8.900-.2l-1.700 8.400c-3 1.300-6 1.300-8.800.2z" fill="#fcc010"/></svg>
<svg style="left:73px;top:866px" width="32" height="30" ><defs><linearGradient id="fd" x1="0" y1="0" x2="0" y2="1"><stop offset="0" stop-color="#fdf0b8"/><stop offset="1" stop-color="#f0d078"/></linearGradient><linearGradient id="st" x1="0" y1="0" x2="0" y2="1"><stop offset="0" stop-color="#d8f0ff"/><stop offset=".5" stop-color="#60b0e8"/><stop offset="1" stop-color="#a0d8f8"/></linearGradient></defs><path d="M2 1h13l1.500 2h13.500l1 1.500v3h-29z" fill="#f4dc90" stroke="#c8a850" stroke-width=".6"/><rect x="4" y="1.800" width="9" height="2" fill="#fff"/><rect x="4" y="1.800" width="2.800" height="2" fill="#10b020"/><rect x="12" y="3.800" width="8" height="2" fill="#fff"/><rect x="12" y="3.800" width="2.800" height="2" fill="#d03020"/><rect x="20" y="5.800" width="8" height="2" fill="#fff"/><rect x="20" y="5.800" width="2.800" height="2" fill="#2090f0"/><path d="M1 7.500h16.500l1.500 2h12v16.500h-30z" fill="url(#fd)" stroke="#d0b060" stroke-width=".7"/><path d="M4.500 29v-10.500q0-2 2-2h18.500q2 0 2 2v10.500h-6.500v-7h-9.500v7z" fill="url(#st)" stroke="#3c90d0" stroke-width=".8" opacity=".95"/><path d="M8 11v12M2.500 17h11M4.500 13l7 8M11.500 13l-7 8" stroke="#fff" stroke-width=".7" opacity=".85"/></svg>
<div class="a" style="left:135px;top:864px;width:32px;height:32px;border-radius:50%;background:#0a8a3c;border:2px solid #fff"></div>
<div class="t" style="left:143px;top:861.500px;font-size:30px;font-weight:bold;color:#fff;transform-origin:50% 50%;transform:skewX(-14deg) scale(1.22,1)">µ</div>
<svg style="left:197px;top:864px" width="32" height="32" ><defs><linearGradient id="gx" x1="0" y1="0" x2="0" y2="1"><stop offset="0" stop-color="#8cc850"/><stop offset="1" stop-color="#3c7c28"/></linearGradient></defs><path d="M0 0h22l-2 5.500h-12v5h9l-2 5.500h-7v16h-8z" fill="#242424"/><path d="M26 0h6v24h-5.500v-6h-10v-3.500z" fill="url(#gx)"/><path d="M26.500 7.500v6h-4z" fill="#a9bfdb"/><path d="M4 17.500h5.500l3 4.500 3-4.500h5.500l-5.500 7.200 5.500 7.300h-5.500l-3-4.500-3 4.500h-5.500l5.500-7.300z" fill="url(#gx)"/><path d="M21 18h5v7.500q0 2 2 2h4v4.500h-5.500q-5.500 0-5.500-5.500z" fill="#242424"/></svg>
<svg style="left:259px;top:866px" width="32" height="30" ><defs><linearGradient id="sp" x1="0" y1="0" x2="0" y2="1"><stop offset="0" stop-color="#b4d4fc"/><stop offset=".45" stop-color="#78a8e0"/><stop offset="1" stop-color="#4470a8"/></linearGradient></defs><path d="M2 0h20l9.500 14.500-8.500 15h-21q-2 0-2-2v-25.500q0-2 2-2z" fill="url(#sp)"/><path d="M4 11h5l7-6.500v20l-7-6.500h-5z" fill="#fff"/><path d="M18 5a10 10 0 0 1 0 19v-2.500a7.500 7.500 0 0 0 0-14z" fill="#fff"/><path d="M18 9.500a5.500 5.500 0 0 1 0 10v-2.300a3.200 3.200 0 0 0 0-5.400z" fill="#fff"/></svg>
<div class="t" style="left:324.500px;top:851px;font-size:52px;font-weight:bold;color:#2ca8f0;text-shadow:0 0 1px #1478c8;transform-origin:50% 50%;transform:scale(.95,1)">e</div>
<svg style="left:320px;top:862px" width="36" height="36" ><path d="M6.500 32.500c-5.500-1-5-8 1.500-15.500s18-14 25-12.500" fill="none" stroke="#f8b810" stroke-width="2.600" stroke-linecap="round"/><path d="M6.500 31.500c-4-1.500-3.500-7.500 2-14s16.500-12.500 23.500-11.700" fill="none" stroke="#ffe060" stroke-width="1"/></svg>
<svg style="left:383px;top:864px" width="32" height="31" ><path d="M2 0h27l3 3v26.500l-1.500 1.500h-28.500l-2-2v-27z" fill="#1844c4"/><path d="M2 0h27l3 3v2h-32v-3z" fill="#2858dc"/><defs><linearGradient id="mt" x1="0" y1="0" x2="1" y2="1"><stop offset="0" stop-color="#f4f4f4"/><stop offset=".5" stop-color="#b8b8b8"/><stop offset="1" stop-color="#f0ece0"/></linearGradient></defs><rect x="9" y="0" width="15" height="10.300" fill="url(#mt)"/><rect x="17" y="1.500" width="4" height="7.500" fill="#1844c4"/><rect x="4" y="14" width="23" height="15" fill="#fff"/><rect x="4" y="29" width="23" height="1.800" fill="#c02838"/><path d="M5.500 17.500h20M5.500 21.500h20M5.500 25.500h10.500" stroke="#d81828" stroke-width="1"/><circle cx="1.800" cy="27.800" r=".8" fill="#0c2060"/><circle cx="29" cy="27.800" r=".8" fill="#0c2060"/></svg>
<div class="t" style="left:399.5px;top:886px;font-size:7.5px;font-weight:bold;color:#606060;letter-spacing:-0.5px;font-family:'Liberation Mono',monospace">64</div>
<svg style="left:446.5px;top:865.5px" width="29" height="29" ><circle cx="14.500" cy="14.500" r="14" fill="#4cb450"/><path d="M14.500 14.500L2.400 7.500A14 14 0 0 1 26.600 7.500z" fill="#e43c30"/><path d="M14.500 .5A14 14 0 0 1 26.600 7.500h-12.100z" fill="#e43c30"/><path d="M26.600 7.500A14 14 0 0 1 14.500 28.500l6-10.500 0-10.500z" fill="#fcd020"/><path d="M14.500 7.500h12.100a14 14 0 0 1-12.100 21l6.200-10.500z" fill="#fcd020"/><circle cx="14.500" cy="14.500" r="6.600" fill="#f4f4f4"/><circle cx="14.500" cy="14.500" r="5.300" fill="#3c88d8"/></svg>
<svg style="left:508px;top:864px" width="31" height="32" ><defs><linearGradient id="np" x1="0" y1="0" x2="0" y2="1"><stop offset="0" stop-color="#fff"/><stop offset=".42" stop-color="#f0f8e0"/><stop offset=".5" stop-color="#c8f050"/><stop offset="1" stop-color="#088010"/></linearGradient></defs><path d="M.5.500h18.500l5 4.500v26h-23.500z" fill="url(#np)" stroke="#909090" stroke-width=".8"/><path d="M19 .500v4.500h5z" fill="#d8d8d8" stroke="#909090" stroke-width=".5"/><path d="M2 2.500h16" stroke="#888" stroke-width="1" stroke-dasharray="1 1"/><path d="M2 5.500h17M2 7.500h20M2 9.500h20M2 11.500h20" stroke="#c8d4e8" stroke-width=".7"/><rect x="6.500" y="9.500" width="2.600" height="9.500" rx="1.300" fill="#e0e0e0" stroke="#000" stroke-width="1"/><path d="M10.500 14.500h3.500M12.250 12.800v3.400M14.500 14.500h3.500M16.250 12.800v3.400" stroke="#000" stroke-width="1"/><path d="M16.500 25.500l1-3.500 9.500-18 2.300 1.200-9.500 18z" fill="#f0a010" stroke="#a86808" stroke-width=".5"/><path d="M27 4l1-2 2.400 1.200-1 2z" fill="#d02030"/><path d="M16.500 25.500l.6-2 1.200.7z" fill="#202020"/></svg>
<svg style="left:564.5px;top:863.5px" width="33" height="33" viewBox="0 0 16 16.200" ><defs><radialGradient id="sg3" cx=".45" cy=".5" r=".55"><stop offset="0" stop-color="#ffd040"/><stop offset=".55" stop-color="#f26a10"/><stop offset=".85" stop-color="#e02808"/><stop offset="1" stop-color="#e84010" stop-opacity=".7"/></radialGradient><linearGradient id="mg3" x1="0" y1=".35" x2="1" y2=".6"><stop offset="0" stop-color="#a8a8a8"/><stop offset=".3" stop-color="#bcbcbc"/><stop offset=".6" stop-color="#8c8c8c"/><stop offset=".82" stop-color="#3a3a3a"/><stop offset="1" stop-color="#000"/></linearGradient></defs><circle cx="7.500" cy="7.600" r="7.500" fill="url(#sg3)"/><path d="M1 9l-1-1.5 1.2-1.2-.4-1.6 1.5-.8" fill="none" stroke="#ffc850" stroke-width="1.2" opacity=".8"/><ellipse cx="10.200" cy="9.900" rx="5.700" ry="6.200" fill="url(#mg3)"/><circle cx="7.300" cy="9.800" r=".7" fill="#555"/><circle cx="7.300" cy="12" r=".8" fill="#444"/></svg>
<svg style="left:1244px;top:877px" width="9" height="5" ><path d="M0 5h9l-4.500-5z" fill="#fff"/></svg>
<svg style="left:1264px;top:872px" width="18" height="17" ><path d="M1.500 5.500h3l4-4v14l-4-4h-3z" fill="#fff" stroke="#4a5870" stroke-width=".8"/><path d="M10.500 5.500q2 3 0 6M12.500 3.500q3.500 5 0 10M14.500 2q5 6.500 0 13" fill="none" stroke="#fff" stroke-width="1.200"/></svg>
<svg style="left:1289px;top:873px" width="17" height="15" ><path d="M5.500 0h6l5.500 9.500h-6z" fill="#c8b860" opacity=".85"/><path d="M5.500 0l3 5-5.500 9.500-3-5z" fill="#58a070" opacity=".85"/><path d="M5.800 9.500h11.200l-3 5h-11z" fill="#4878c8" opacity=".85"/></svg>
<svg style="left:1313px;top:872px" width="17" height="16" ><path d="M4.200 0l4.300 2.800-4.300 2.800-4.200-2.800zM12.800 0l4.200 2.800-4.200 2.800-4.300-2.800zM0 8.400l4.200-2.800 4.300 2.800-4.300 2.800zM12.800 5.600l4.200 2.800-4.200 2.800-4.300-2.800zM4.300 12.100l4.200-2.800 4.300 2.800-4.300 2.800z" fill="#2090e8" stroke="#e8f4ff" stroke-width=".5"/></svg>
<div class="a" style="left:424px;top:144px;width:592px;height:612px;background:#b9d1ea;border:1px solid #2a2a2a;border-radius:6px 6px 0 0"></div>
<div class="a" style="left:425px;top:145px;width:590px;height:31px;background:linear-gradient(#9bb2d0,#a9c1de 50%,#b9d1ea);border-radius:5px 5px 0 0"></div>
<div class="a" style="left:425px;top:152px;width:1px;height:602px;background:#dbe8f5;"></div>
<div class="a" style="left:1014px;top:152px;width:1px;height:602px;background:#45bce8;"></div>
<div class="a" style="left:431px;top:145px;width:578px;height:1px;background:rgba(255,255,255,.55);"></div>
<div class="a" style="left:425px;top:754px;width:590px;height:1px;background:#3db8e0;"></div>
<div class="t" style="left:454px;top:157px;font-size:12px;color:#000;letter-spacing:-0.373px;">Ephemeris</div>
<div class="cb" style="left:910px;top:154px;width:30px;height:17px;border-color:#6f86a6;background:linear-gradient(#c4d5ea,#d2e0f1 45%,#a9bfdc 50%,#bdd0e8)"></div>
<div class="cb" style="left:942px;top:154px;width:31px;height:17px;border-color:#6f86a6;background:linear-gradient(#c4d5ea,#d2e0f1 45%,#a9bfdc 50%,#bdd0e8)"></div>
<div class="cb" style="left:975px;top:154px;width:31px;height:17px;border-color:#5b2a25;background:linear-gradient(#e9aa9c,#dd8874 45%,#c4482c 50%,#d06a4c)"></div>
<div class="a" style="left:432px;top:174px;width:576px;height:574px;background:#ffffff;"></div>
<div class="a" style="left:432px;top:174px;width:574px;height:572px;background:#d8d8d8;"></div>
<div class="a" style="left:433px;top:175px;width:573px;height:571px;background:#f4f4f4;"></div>
<div class="a" style="left:433px;top:175px;width:572px;height:570px;background:#909090;"></div>
<div class="a" style="left:434px;top:176px;width:571px;height:569px;background:#484848;"></div>
<div class="a" style="left:435px;top:177px;width:570px;height:568px;background:#f2f2f2;"></div>
<div class="a" style="left:435px;top:177px;width:553px;height:551px;overflow:hidden;background:#9c9c9c">
<div class="a" style="left:0;top:0;width:553px;height:52px;background:#fff"></div>
<div class="a" style="left:0;top:52px;width:154px;height:500px;background:#fff"></div>
<div class="hc" style="left:0px;top:0px;width:153px;height:51px;line-height:15px;padding-top:4px;letter-spacing:-0.12px;">GMT +0 Hours
Heliocentric
Tropical</div>
<div class="hc" style="left:154px;top:0px;width:111px;height:51px;line-height:15px;padding-top:12px;letter-spacing:-0.12px;">Moon
Latitude</div>
<div class="hc" style="left:266px;top:0px;width:111px;height:51px;line-height:15px;padding-top:4px;letter-spacing:-0.12px;">Moon
South Node
True</div>
<div class="hc" style="left:378px;top:0px;width:111px;height:51px;line-height:15px;padding-top:12px;letter-spacing:-0.12px;">Mercury
Latitude</div>
<div class="hc" style="left:490px;top:0px;width:111px;height:51px;line-height:15px;padding-top:4px;letter-spacing:-0.12px;padding-right:2px;">Mercury
South Node
True</div>
<div class="hc" style="left:0px;top:52px;width:153px;height:17px;line-height:17px;letter-spacing:0.1px;padding-top:1px;">Jan 1, 2000   09:44:00</div>
<div class="dc" style="left:154px;top:52px;width:111px;height:17px;line-height:17px;letter-spacing:0.1px;padding-top:1px;background:#c6c6ff;">-0°00'42,209"</div>
<div class="dc" style="left:266px;top:52px;width:111px;height:17px;line-height:17px;letter-spacing:0.1px;padding-top:1px;">112°01'40,766"</div>
<div class="dc" style="left:378px;top:52px;width:111px;height:17px;line-height:17px;letter-spacing:0.1px;padding-top:1px;">-5°55'21,908"</div>
<div class="dc" style="left:490px;top:52px;width:111px;height:17px;line-height:17px;letter-spacing:0.1px;padding-top:1px;text-align:left;padding-left:11.8px;letter-spacing:.28px;">228°19'37,896"</div>
<div class="hc" style="left:0px;top:70px;width:153px;height:17px;line-height:17px;letter-spacing:0.1px;padding-top:1px;">Jan 2, 2000   09:44:00</div>
<div class="dc" style="left:154px;top:70px;width:111px;height:17px;line-height:17px;letter-spacing:0.1px;padding-top:1px;">-0°00'46,337"</div>
<div class="dc" style="left:266px;top:70px;width:111px;height:17px;line-height:17px;letter-spacing:0.1px;padding-top:1px;">113°02'58,360"</div>
<div class="dc" style="left:378px;top:70px;width:111px;height:17px;line-height:17px;letter-spacing:0.1px;padding-top:1px;">-6°06'27,783"</div>
<div class="dc" style="left:490px;top:70px;width:111px;height:17px;line-height:17px;letter-spacing:0.1px;padding-top:1px;text-align:left;padding-left:11.8px;letter-spacing:.28px;">228°19'38,009"</div>
<div class="hc" style="left:0px;top:88px;width:153px;height:17px;line-height:17px;letter-spacing:0.1px;padding-top:1px;">Jan 3, 2000   09:44:00</div>
<div class="dc" style="left:154px;top:88px;width:111px;height:17px;line-height:17px;letter-spacing:0.1px;padding-top:1px;">-0°00'47,935"</div>
<div class="dc" style="left:266px;top:88px;width:111px;height:17px;line-height:17px;letter-spacing:0.1px;padding-top:1px;">114°04'15,290"</div>
<div class="dc" style="left:378px;top:88px;width:111px;height:17px;line-height:17px;letter-spacing:0.1px;padding-top:1px;">-6°16'43,185"</div>
<div class="dc" style="left:490px;top:88px;width:111px;height:17px;line-height:17px;letter-spacing:0.1px;padding-top:1px;text-align:left;padding-left:13px;letter-spacing:.28px;">228°19'38,111"</div>
<div class="hc" style="left:0px;top:106px;width:153px;height:17px;line-height:17px;letter-spacing:0.1px;padding-top:1px;">Jan 4, 2000   09:44:00</div>
<div class="dc" style="left:154px;top:106px;width:111px;height:17px;line-height:17px;letter-spacing:0.1px;padding-top:1px;">-0°00'46,819"</div>
<div class="dc" style="left:266px;top:106px;width:111px;height:17px;line-height:17px;letter-spacing:0.1px;padding-top:1px;">115°05'31,524"</div>
<div class="dc" style="left:378px;top:106px;width:111px;height:17px;line-height:17px;letter-spacing:0.1px;padding-top:1px;">-6°26'04,677"</div>
<div class="dc" style="left:490px;top:106px;width:111px;height:17px;line-height:17px;letter-spacing:0.1px;padding-top:1px;text-align:left;padding-left:11.8px;letter-spacing:.28px;">228°19'38,234"</div>
<div class="hc" style="left:0px;top:124px;width:153px;height:17px;line-height:17px;letter-spacing:0.1px;padding-top:1px;">Jan 5, 2000   09:44:00</div>
<div class="dc" style="left:154px;top:124px;width:111px;height:17px;line-height:17px;letter-spacing:0.1px;padding-top:1px;">-0°00'42,949"</div>
<div class="dc" style="left:266px;top:124px;width:111px;height:17px;line-height:17px;letter-spacing:0.1px;padding-top:1px;">116°06'47,068"</div>
<div class="dc" style="left:378px;top:124px;width:111px;height:17px;line-height:17px;letter-spacing:0.1px;padding-top:1px;">-6°34'28,475"</div>
<div class="dc" style="left:490px;top:124px;width:111px;height:17px;line-height:17px;letter-spacing:0.1px;padding-top:1px;text-align:left;padding-left:11.8px;letter-spacing:.28px;">228°19'38,347"</div>
<div class="hc" style="left:0px;top:142px;width:153px;height:17px;line-height:17px;letter-spacing:0.1px;padding-top:1px;">Jan 6, 2000   09:44:00</div>
<div class="dc" style="left:154px;top:142px;width:111px;height:17px;line-height:17px;letter-spacing:0.1px;padding-top:1px;">-0°00'36,466"</div>
<div class="dc" style="left:266px;top:142px;width:111px;height:17px;line-height:17px;letter-spacing:0.1px;padding-top:1px;">117°08'01,955"</div>
<div class="dc" style="left:378px;top:142px;width:111px;height:17px;line-height:17px;letter-spacing:0.1px;padding-top:1px;">-6°41'50,423"</div>
<div class="dc" style="left:490px;top:142px;width:111px;height:17px;line-height:17px;letter-spacing:0.1px;padding-top:1px;text-align:left;padding-left:11.8px;letter-spacing:.28px;">228°19'38,460"</div>
<div class="hc" style="left:0px;top:160px;width:153px;height:17px;line-height:17px;letter-spacing:0.1px;padding-top:1px;">Jan 7, 2000   09:44:00</div>
<div class="dc" style="left:154px;top:160px;width:111px;height:17px;line-height:17px;letter-spacing:0.1px;padding-top:1px;">-0°00'27,701"</div>
<div class="dc" style="left:266px;top:160px;width:111px;height:17px;line-height:17px;letter-spacing:0.1px;padding-top:1px;">118°09'16,232"</div>
<div class="dc" style="left:378px;top:160px;width:111px;height:17px;line-height:17px;letter-spacing:0.1px;padding-top:1px;">-6°48'05,968"</div>
<div class="dc" style="left:490px;top:160px;width:111px;height:17px;line-height:17px;letter-spacing:0.1px;padding-top:1px;text-align:left;padding-left:11.8px;letter-spacing:.28px;">228°19'38,572"</div>
<div class="hc" style="left:0px;top:178px;width:153px;height:17px;line-height:17px;letter-spacing:0.1px;padding-top:1px;">Jan 8, 2000   09:44:00</div>
<div class="dc" style="left:154px;top:178px;width:111px;height:17px;line-height:17px;letter-spacing:0.1px;padding-top:1px;">-0°00'17,171"</div>
<div class="dc" style="left:266px;top:178px;width:111px;height:17px;line-height:17px;letter-spacing:0.1px;padding-top:1px;">119°10'29,928"</div>
<div class="dc" style="left:378px;top:178px;width:111px;height:17px;line-height:17px;letter-spacing:0.1px;padding-top:1px;">-6°53'10,131"</div>
<div class="dc" style="left:490px;top:178px;width:111px;height:17px;line-height:17px;letter-spacing:0.1px;padding-top:1px;text-align:left;padding-left:11.8px;letter-spacing:.28px;">228°19'39,085"</div>
<div class="hc" style="left:0px;top:196px;width:153px;height:17px;line-height:17px;letter-spacing:0.1px;padding-top:1px;">Jan 9, 2000   09:44:00</div>
<div class="dc" style="left:154px;top:196px;width:111px;height:17px;line-height:17px;letter-spacing:0.1px;padding-top:1px;">-0°00'05,542"</div>
<div class="dc" style="left:266px;top:196px;width:111px;height:17px;line-height:17px;letter-spacing:0.1px;padding-top:1px;">120°11'43,043"</div>
<div class="dc" style="left:378px;top:196px;width:111px;height:17px;line-height:17px;letter-spacing:0.1px;padding-top:1px;">-6°56'57,484"</div>
<div class="dc" style="left:490px;top:196px;width:111px;height:17px;line-height:17px;letter-spacing:0.1px;padding-top:1px;text-align:left;padding-left:11.8px;letter-spacing:.28px;">228°19'39,098"</div>
<div class="hc" style="left:0px;top:214px;width:153px;height:17px;line-height:17px;letter-spacing:0.1px;padding-top:1px;">Jan 10, 2000   09:44:00</div>
<div class="dc" style="left:154px;top:214px;width:111px;height:17px;line-height:17px;letter-spacing:0.1px;padding-top:1px;">0°00'06,438"</div>
<div class="dc" style="left:266px;top:214px;width:111px;height:17px;line-height:17px;letter-spacing:0.1px;padding-top:1px;">121°12'55,543"</div>
<div class="dc" style="left:378px;top:214px;width:111px;height:17px;line-height:17px;letter-spacing:0.1px;padding-top:1px;">-6°59'22,133"</div>
<div class="dc" style="left:490px;top:214px;width:111px;height:17px;line-height:17px;letter-spacing:0.1px;padding-top:1px;text-align:left;padding-left:11.8px;letter-spacing:.28px;">228°19'39,210"</div>
<div class="hc" style="left:0px;top:232px;width:153px;height:17px;line-height:17px;letter-spacing:0.1px;padding-top:1px;">Jan 11, 2000   09:44:00</div>
<div class="dc" style="left:154px;top:232px;width:111px;height:17px;line-height:17px;letter-spacing:0.1px;padding-top:1px;">0°00'18,013"</div>
<div class="dc" style="left:266px;top:232px;width:111px;height:17px;line-height:17px;letter-spacing:0.1px;padding-top:1px;">122°14'07,380"</div>
<div class="dc" style="left:378px;top:232px;width:111px;height:17px;line-height:17px;letter-spacing:0.1px;padding-top:1px;">-7°00'17,705"</div>
<div class="dc" style="left:490px;top:232px;width:111px;height:17px;line-height:17px;letter-spacing:0.1px;padding-top:1px;text-align:left;padding-left:11.8px;letter-spacing:.28px;">228°19'39,323"</div>
<div class="hc" style="left:0px;top:250px;width:153px;height:17px;line-height:17px;letter-spacing:0.1px;padding-top:1px;">Jan 12, 2000   09:44:00</div>
<div class="dc" style="left:154px;top:250px;width:111px;height:17px;line-height:17px;letter-spacing:0.1px;padding-top:1px;">0°00'28,497"</div>
<div class="dc" style="left:266px;top:250px;width:111px;height:17px;line-height:17px;letter-spacing:0.1px;padding-top:1px;">123°15'18,525"</div>
<div class="dc" style="left:378px;top:250px;width:111px;height:17px;line-height:17px;letter-spacing:0.1px;padding-top:1px;">-6°59'37,346"</div>
<div class="dc" style="left:490px;top:250px;width:111px;height:17px;line-height:17px;letter-spacing:0.1px;padding-top:1px;text-align:left;padding-left:11.8px;letter-spacing:.28px;">228°19'39,436"</div>
<div class="hc" style="left:0px;top:268px;width:153px;height:17px;line-height:17px;letter-spacing:0.1px;padding-top:1px;">Jan 13, 2000   09:44:00</div>
<div class="dc" style="left:154px;top:268px;width:111px;height:17px;line-height:17px;letter-spacing:0.1px;padding-top:1px;">0°00'37,330"</div>
<div class="dc" style="left:266px;top:268px;width:111px;height:17px;line-height:17px;letter-spacing:0.1px;padding-top:1px;">124°16'28,974"</div>
<div class="dc" style="left:378px;top:268px;width:111px;height:17px;line-height:17px;letter-spacing:0.1px;padding-top:1px;">-6°57'13,733"</div>
<div class="dc" style="left:490px;top:268px;width:111px;height:17px;line-height:17px;letter-spacing:0.1px;padding-top:1px;text-align:left;padding-left:11.8px;letter-spacing:.28px;">228°19'39,549"</div>
<div class="hc" style="left:0px;top:286px;width:153px;height:17px;line-height:17px;letter-spacing:0.1px;padding-top:1px;">Jan 14, 2000   09:44:00</div>
<div class="dc" style="left:154px;top:286px;width:111px;height:17px;line-height:17px;letter-spacing:0.1px;padding-top:1px;">0°00'44,096"</div>
<div class="dc" style="left:266px;top:286px;width:111px;height:17px;line-height:17px;letter-spacing:0.1px;padding-top:1px;">125°17'38,755"</div>
<div class="dc" style="left:378px;top:286px;width:111px;height:17px;line-height:17px;letter-spacing:0.1px;padding-top:1px;">-6°52'59,105"</div>
<div class="dc" style="left:490px;top:286px;width:111px;height:17px;line-height:17px;letter-spacing:0.1px;padding-top:1px;text-align:left;padding-left:11.8px;letter-spacing:.28px;">228°19'39,662"</div>
<div class="hc" style="left:0px;top:304px;width:153px;height:17px;line-height:17px;letter-spacing:0.1px;padding-top:1px;">Jan 15, 2000   09:44:00</div>
<div class="dc" style="left:154px;top:304px;width:111px;height:17px;line-height:17px;letter-spacing:0.1px;padding-top:1px;">0°00'48,534"</div>
<div class="dc" style="left:266px;top:304px;width:111px;height:17px;line-height:17px;letter-spacing:0.1px;padding-top:1px;">126°18'47,903"</div>
<div class="dc" style="left:378px;top:304px;width:111px;height:17px;line-height:17px;letter-spacing:0.1px;padding-top:1px;">-6°46'45,319"</div>
<div class="dc" style="left:490px;top:304px;width:111px;height:17px;line-height:17px;letter-spacing:0.1px;padding-top:1px;text-align:left;padding-left:11.8px;letter-spacing:.28px;">228°19'40,075"</div>
<div class="hc" style="left:0px;top:322px;width:153px;height:17px;line-height:17px;letter-spacing:0.1px;padding-top:1px;">Jan 16, 2000   09:44:00</div>
<div class="dc" style="left:154px;top:322px;width:111px;height:17px;line-height:17px;letter-spacing:0.1px;padding-top:1px;">0°00'50,517"</div>
<div class="dc" style="left:266px;top:322px;width:111px;height:17px;line-height:17px;letter-spacing:0.1px;padding-top:1px;">127°19'56,446"</div>
<div class="dc" style="left:378px;top:322px;width:111px;height:17px;line-height:17px;letter-spacing:0.1px;padding-top:1px;">-6°38'23,935"</div>
<div class="dc" style="left:490px;top:322px;width:111px;height:17px;line-height:17px;letter-spacing:0.1px;padding-top:1px;text-align:left;padding-left:11.8px;letter-spacing:.28px;">228°19'40,088"</div>
<div class="hc" style="left:0px;top:340px;width:153px;height:17px;line-height:17px;letter-spacing:0.1px;padding-top:1px;">Jan 17, 2000   09:44:00</div>
<div class="dc" style="left:154px;top:340px;width:111px;height:17px;line-height:17px;letter-spacing:0.1px;padding-top:1px;">0°00'50,041"</div>
<div class="dc" style="left:266px;top:340px;width:111px;height:17px;line-height:17px;letter-spacing:0.1px;padding-top:1px;">128°21'04,389"</div>
<div class="dc" style="left:378px;top:340px;width:111px;height:17px;line-height:17px;letter-spacing:0.1px;padding-top:1px;">-6°27'46,351"</div>
<div class="dc" style="left:490px;top:340px;width:111px;height:17px;line-height:17px;letter-spacing:0.1px;padding-top:1px;text-align:left;padding-left:11.8px;letter-spacing:.28px;">228°19'40,200"</div>
<div class="hc" style="left:0px;top:358px;width:153px;height:17px;line-height:17px;letter-spacing:0.1px;padding-top:1px;">Jan 18, 2000   09:44:00</div>
<div class="dc" style="left:154px;top:358px;width:111px;height:17px;line-height:17px;letter-spacing:0.1px;padding-top:1px;">0°00'47,199"</div>
<div class="dc" style="left:266px;top:358px;width:111px;height:17px;line-height:17px;letter-spacing:0.1px;padding-top:1px;">129°22'11,709"</div>
<div class="dc" style="left:378px;top:358px;width:111px;height:17px;line-height:17px;letter-spacing:0.1px;padding-top:1px;">-6°14'43,979"</div>
<div class="dc" style="left:490px;top:358px;width:111px;height:17px;line-height:17px;letter-spacing:0.1px;padding-top:1px;text-align:left;padding-left:11.8px;letter-spacing:.28px;">228°19'40,313"</div>
<div class="hc" style="left:0px;top:376px;width:153px;height:17px;line-height:17px;letter-spacing:0.1px;padding-top:1px;">Jan 19, 2000   09:44:00</div>
<div class="dc" style="left:154px;top:376px;width:111px;height:17px;line-height:17px;letter-spacing:0.1px;padding-top:1px;">0°00'42,173"</div>
<div class="dc" style="left:266px;top:376px;width:111px;height:17px;line-height:17px;letter-spacing:0.1px;padding-top:1px;">130°23'18,355"</div>
<div class="dc" style="left:378px;top:376px;width:111px;height:17px;line-height:17px;letter-spacing:0.1px;padding-top:1px;">-5°59'08,489"</div>
<div class="dc" style="left:490px;top:376px;width:111px;height:17px;line-height:17px;letter-spacing:0.1px;padding-top:1px;text-align:left;padding-left:11.8px;letter-spacing:.28px;">228°19'40,426"</div>
<div class="hc" style="left:0px;top:394px;width:153px;height:17px;line-height:17px;letter-spacing:0.1px;padding-top:1px;">Jan 20, 2000   09:44:00</div>
<div class="dc" style="left:154px;top:394px;width:111px;height:17px;line-height:17px;letter-spacing:0.1px;padding-top:1px;">0°00'35,220"</div>
<div class="dc" style="left:266px;top:394px;width:111px;height:17px;line-height:17px;letter-spacing:0.1px;padding-top:1px;">131°24'24,257"</div>
<div class="dc" style="left:378px;top:394px;width:111px;height:17px;line-height:17px;letter-spacing:0.1px;padding-top:1px;">-5°40'52,126"</div>
<div class="dc" style="left:490px;top:394px;width:111px;height:17px;line-height:17px;letter-spacing:0.1px;padding-top:1px;text-align:left;padding-left:11.8px;letter-spacing:.28px;">228°19'40,539"</div>
<div class="hc" style="left:0px;top:412px;width:153px;height:17px;line-height:17px;letter-spacing:0.1px;padding-top:1px;">Jan 21, 2000   09:44:00</div>
<div class="dc" style="left:154px;top:412px;width:111px;height:17px;line-height:17px;letter-spacing:0.1px;padding-top:1px;">0°00'26,666"</div>
<div class="dc" style="left:266px;top:412px;width:111px;height:17px;line-height:17px;letter-spacing:0.1px;padding-top:1px;">132°25'29,339"</div>
<div class="dc" style="left:378px;top:412px;width:111px;height:17px;line-height:17px;letter-spacing:0.1px;padding-top:1px;">-5°19'48,101"</div>
<div class="dc" style="left:490px;top:412px;width:111px;height:17px;line-height:17px;letter-spacing:0.1px;padding-top:1px;text-align:left;padding-left:11.8px;letter-spacing:.28px;">228°19'40,652"</div>
<div class="hc" style="left:0px;top:430px;width:153px;height:17px;line-height:17px;letter-spacing:0.1px;padding-top:1px;">Jan 22, 2000   09:44:00</div>
<div class="dc" style="left:154px;top:430px;width:111px;height:17px;line-height:17px;letter-spacing:0.1px;padding-top:1px;">0°00'16,895"</div>
<div class="dc" style="left:266px;top:430px;width:111px;height:17px;line-height:17px;letter-spacing:0.1px;padding-top:1px;">133°26'33,522"</div>
<div class="dc" style="left:378px;top:430px;width:111px;height:17px;line-height:17px;letter-spacing:0.1px;padding-top:1px;">-4°55'51,081"</div>
<div class="dc" style="left:490px;top:430px;width:111px;height:17px;line-height:17px;letter-spacing:0.1px;padding-top:1px;text-align:left;padding-left:11.8px;letter-spacing:.28px;">228°19'41,065"</div>
<div class="hc" style="left:0px;top:448px;width:153px;height:17px;line-height:17px;letter-spacing:0.1px;padding-top:1px;">Jan 23, 2000   09:44:00</div>
<div class="dc" style="left:154px;top:448px;width:111px;height:17px;line-height:17px;letter-spacing:0.1px;padding-top:1px;">0°00'06,347"</div>
<div class="dc" style="left:266px;top:448px;width:111px;height:17px;line-height:17px;letter-spacing:0.1px;padding-top:1px;">134°27'36,726"</div>
<div class="dc" style="left:378px;top:448px;width:111px;height:17px;line-height:17px;letter-spacing:0.1px;padding-top:1px;">-4°28'57,761"</div>
<div class="dc" style="left:490px;top:448px;width:111px;height:17px;line-height:17px;letter-spacing:0.1px;padding-top:1px;text-align:left;padding-left:11.8px;letter-spacing:.28px;">228°19'41,078"</div>
<div class="hc" style="left:0px;top:466px;width:153px;height:17px;line-height:17px;letter-spacing:0.1px;padding-top:1px;">Jan 24, 2000   09:44:00</div>
<div class="dc" style="left:154px;top:466px;width:111px;height:17px;line-height:17px;letter-spacing:0.1px;padding-top:1px;">-0°00'04,494"</div>
<div class="dc" style="left:266px;top:466px;width:111px;height:17px;line-height:17px;letter-spacing:0.1px;padding-top:1px;">135°28'38,870"</div>
<div class="dc" style="left:378px;top:466px;width:111px;height:17px;line-height:17px;letter-spacing:0.1px;padding-top:1px;">-3°59'07,516"</div>
<div class="dc" style="left:490px;top:466px;width:111px;height:17px;line-height:17px;letter-spacing:0.1px;padding-top:1px;text-align:left;padding-left:11.8px;letter-spacing:.28px;">228°19'41,090"</div>
<div class="hc" style="left:0px;top:484px;width:153px;height:17px;line-height:17px;letter-spacing:0.1px;padding-top:1px;">Jan 25, 2000   09:44:00</div>
<div class="dc" style="left:154px;top:484px;width:111px;height:17px;line-height:17px;letter-spacing:0.1px;padding-top:1px;">-0°00'15,116"</div>
<div class="dc" style="left:266px;top:484px;width:111px;height:17px;line-height:17px;letter-spacing:0.1px;padding-top:1px;">136°29'39,859"</div>
<div class="dc" style="left:378px;top:484px;width:111px;height:17px;line-height:17px;letter-spacing:0.1px;padding-top:1px;">-3°26'23,116"</div>
<div class="dc" style="left:490px;top:484px;width:111px;height:17px;line-height:17px;letter-spacing:0.1px;padding-top:1px;text-align:left;padding-left:11.8px;letter-spacing:.28px;">228°19'41,203"</div>
<div class="hc" style="left:0px;top:502px;width:153px;height:17px;line-height:17px;letter-spacing:0.1px;padding-top:1px;">Jan 26, 2000   09:44:00</div>
<div class="dc" style="left:154px;top:502px;width:111px;height:17px;line-height:17px;letter-spacing:0.1px;padding-top:1px;">-0°00'24,995"</div>
<div class="dc" style="left:266px;top:502px;width:111px;height:17px;line-height:17px;letter-spacing:0.1px;padding-top:1px;">137°30'39,581"</div>
<div class="dc" style="left:378px;top:502px;width:111px;height:17px;line-height:17px;letter-spacing:0.1px;padding-top:1px;">-2°50'51,452"</div>
<div class="dc" style="left:490px;top:502px;width:111px;height:17px;line-height:17px;letter-spacing:0.1px;padding-top:1px;text-align:left;padding-left:11.8px;letter-spacing:.28px;">228°19'41,316"</div>
<div class="hc" style="left:0px;top:520px;width:153px;height:17px;line-height:17px;letter-spacing:0.1px;padding-top:1px;">Jan 27, 2000   09:44:00</div>
<div class="dc" style="left:154px;top:520px;width:111px;height:17px;line-height:17px;letter-spacing:0.1px;padding-top:1px;">-0°00'33,622"</div>
<div class="dc" style="left:266px;top:520px;width:111px;height:17px;line-height:17px;letter-spacing:0.1px;padding-top:1px;">138°31'37,915"</div>
<div class="dc" style="left:378px;top:520px;width:111px;height:17px;line-height:17px;letter-spacing:0.1px;padding-top:1px;">-2°12'44,236"</div>
<div class="dc" style="left:490px;top:520px;width:111px;height:17px;line-height:17px;letter-spacing:0.1px;padding-top:1px;text-align:left;padding-left:11.8px;letter-spacing:.28px;">228°19'41,429"</div>
<div class="hc" style="left:0px;top:538px;width:153px;height:17px;line-height:17px;letter-spacing:0.1px;padding-top:1px;">Jan 28, 2000   09:44:00</div>
<div class="dc" style="left:154px;top:538px;width:111px;height:17px;line-height:17px;letter-spacing:0.1px;padding-top:1px;">-0°00'40,524"</div>
<div class="dc" style="left:266px;top:538px;width:111px;height:17px;line-height:17px;letter-spacing:0.1px;padding-top:1px;">139°32'34,739"</div>
<div class="dc" style="left:378px;top:538px;width:111px;height:17px;line-height:17px;letter-spacing:0.1px;padding-top:1px;">-1°32'18,574"</div>
<div class="dc" style="left:490px;top:538px;width:111px;height:17px;line-height:17px;letter-spacing:0.1px;padding-top:1px;text-align:left;padding-left:11.8px;letter-spacing:.28px;">228°19'41,542"</div>
</div>
<div class="a" style="left:436px;top:178px;width:21px;height:19px;background:#f0f0f0;border:1px solid;border-color:#fff #696969 #696969 #fff;box-shadow:inset -1px -1px 0 #a0a0a0"></div>
<div class="a" style="left:988px;top:177px;width:17px;height:551px;background:#f8f8f8;"></div>
<div class="a" style="left:988px;top:177px;width:17px;height:17px;background:#f0f0f0;border:1px solid;border-color:#ffffff #696969 #696969 #ffffff;box-shadow:inset -1px -1px 0 #a0a0a0,inset 1px 1px 0 #f0f0f0"></div>
<svg style="left:993px;top:183px" width="7" height="4"><path d="M0 4h7l-3.5-4z" fill="#000"/></svg>
<div class="a" style="left:988px;top:194px;width:17px;height:17px;background:#f0f0f0;border:1px solid;border-color:#ffffff #696969 #696969 #ffffff;box-shadow:inset -1px -1px 0 #a0a0a0,inset 1px 1px 0 #f0f0f0"></div>
<div class="a" style="left:988px;top:711px;width:17px;height:17px;background:#f0f0f0;border:1px solid;border-color:#ffffff #696969 #696969 #ffffff;box-shadow:inset -1px -1px 0 #a0a0a0,inset 1px 1px 0 #f0f0f0"></div>
<svg style="left:993px;top:718px" width="7" height="4"><path d="M0 0h7l-3.5 4z" fill="#000"/></svg>
<div class="a" style="left:435px;top:728px;width:553px;height:17px;background:#f8f8f8;"></div>
<div class="a" style="left:435px;top:728px;width:16px;height:17px;background:#f0f0f0;border:1px solid;border-color:#ffffff #696969 #696969 #ffffff;box-shadow:inset -1px -1px 0 #a0a0a0,inset 1px 1px 0 #f0f0f0"></div>
<svg style="left:440px;top:733px" width="4" height="7"><path d="M4 0v7l-4-3.5z" fill="#000"/></svg>
<div class="a" style="left:451px;top:728px;width:18px;height:17px;background:#f0f0f0;border:1px solid;border-color:#ffffff #696969 #696969 #ffffff;box-shadow:inset -1px -1px 0 #a0a0a0,inset 1px 1px 0 #f0f0f0"></div>
<div class="a" style="left:972px;top:728px;width:16px;height:17px;background:#f0f0f0;border:1px solid;border-color:#ffffff #696969 #696969 #ffffff;box-shadow:inset -1px -1px 0 #a0a0a0,inset 1px 1px 0 #f0f0f0"></div>
<svg style="left:979px;top:733px" width="4" height="7"><path d="M0 0v7l4-3.5z" fill="#000"/></svg>
<div class="a" style="left:988px;top:728px;width:17px;height:17px;background:#f0f0f0;"></div>
<svg style="left:988px;top:728px" width="17" height="17"><path d="M16.500 5.500L5.500 16.500M16.500 9.500L9.500 16.500M16.500 13.500L13.500 16.500" stroke="#9c9c9c" stroke-width="1.700"/><path d="M16.500 4L4 16.500M16.500 8L8 16.500M16.500 12L12 16.500" stroke="#fff" stroke-width="1"/></svg>
<svg style="left:434px;top:154px" width="16" height="16" viewBox="0 0 16 16.200" ><defs><radialGradient id="sg4" cx=".45" cy=".5" r=".55"><stop offset="0" stop-color="#ffd040"/><stop offset=".55" stop-color="#f26a10"/><stop offset=".85" stop-color="#e02808"/><stop offset="1" stop-color="#e84010" stop-opacity=".7"/></radialGradient><linearGradient id="mg4" x1="0" y1=".35" x2="1" y2=".6"><stop offset="0" stop-color="#a8a8a8"/><stop offset=".3" stop-color="#bcbcbc"/><stop offset=".6" stop-color="#8c8c8c"/><stop offset=".82" stop-color="#3a3a3a"/><stop offset="1" stop-color="#000"/></linearGradient></defs><circle cx="7.500" cy="7.600" r="7.500" fill="url(#sg4)"/><path d="M1 9l-1-1.5 1.2-1.2-.4-1.6 1.5-.8" fill="none" stroke="#ffc850" stroke-width="1.2" opacity=".8"/><ellipse cx="10.200" cy="9.900" rx="5.700" ry="6.200" fill="url(#mg4)"/><circle cx="7.300" cy="9.800" r=".7" fill="#555"/><circle cx="7.300" cy="12" r=".8" fill="#444"/></svg>
<svg style="left:910px;top:155px" width="30" height="16" ><rect x="9.5" y="8.5" width="11" height="4" rx="1" fill="#f4f4f4" stroke="#444" stroke-width="1"/></svg>
<svg style="left:943px;top:155px" width="30" height="16" ><rect x="9.5" y="3.5" width="11" height="9" rx="1" fill="#f4f4f4" stroke="#444"/><rect x="12.5" y="6.5" width="5" height="3" fill="#d0d8e4" stroke="#444"/></svg>
<svg style="left:976px;top:155px" width="30" height="16" ><path d="M10.5 3.5h3l1.8 2.3 1.8-2.3h3l-3.2 4.5 3.2 4.5h-3l-1.8-2.3-1.8 2.3h-3l3.2-4.5z" fill="#f4f4f4" stroke="#444" stroke-width="1" stroke-linejoin="round"/></svg>
<svg style="left:439px;top:179px" width="14" height="16" ><path d="M1.5 2.5h11v13h-11z" fill="#9a9a48" stroke="#000"/><path d="M3.5 5.5h7v8h-7z" fill="#fff" stroke="none"/><path d="M4 2.5l3-2.5 3 2.5v2h-6z" fill="#000"/><path d="M6 2.6l1-1.2 1 1.2z" fill="#ffff00"/><rect x="4" y="3.5" width="6" height="1.5" fill="#fff"/><path d="M4.5 7.5h2M7.5 7.5h2M4.5 9.5h3.5M9 9.5h.8M4.5 11.5h2M7.5 11.5h2" stroke="#000" stroke-width="1"/></svg>
</body></html>
